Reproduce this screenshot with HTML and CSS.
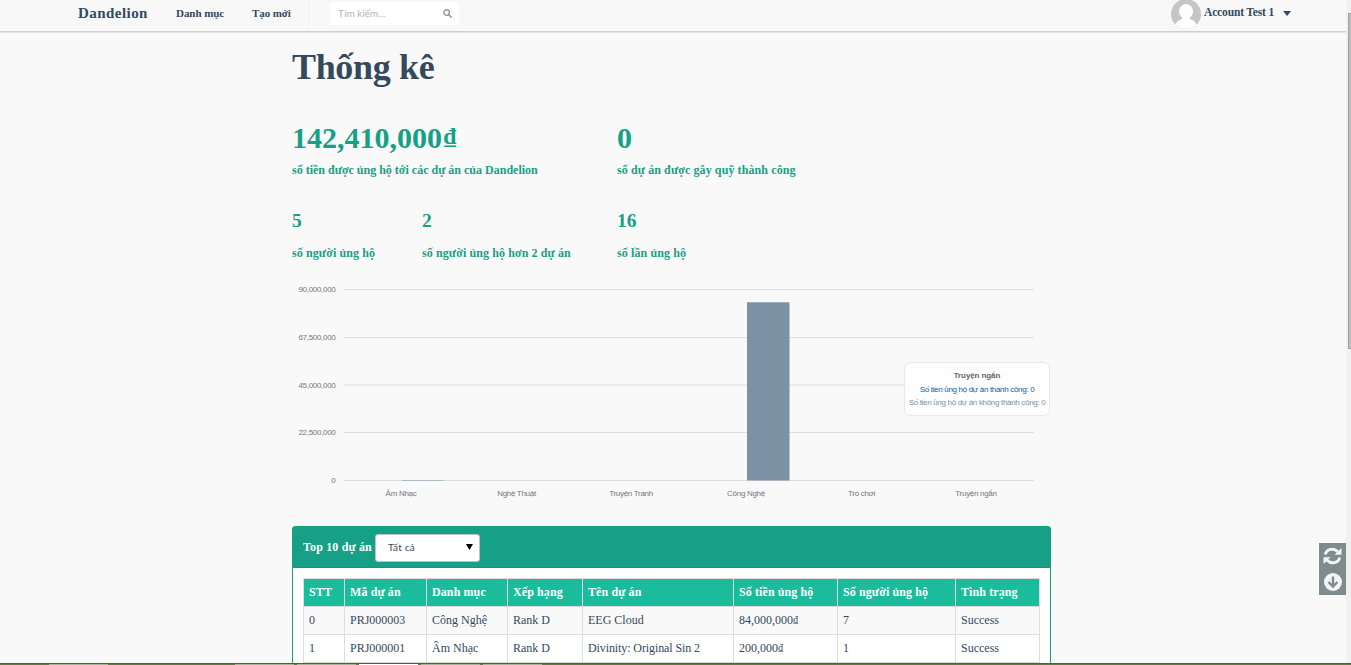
FILE: index.html
```html
<!DOCTYPE html>
<html lang="vi">
<head>
<meta charset="utf-8">
<title>Dandelion - Thống kê</title>
<link rel="stylesheet" href="styles.css">
</head>
<body>
<header class="topbar">
  <a class="brand">Dandelion</a>
  <a class="nav-a">Danh mục</a>
  <a class="nav-b">Tạo mới</a>
  <span class="divider"></span>
  <div class="search"><span class="hint">Tìm kiếm...</span>
    <svg width="9" height="9" viewBox="0 0 9 9"><circle cx="3.6" cy="3.6" r="2.8" fill="none" stroke="#8d99a5" stroke-width="1.4"/><path d="M5.7 5.7L8.2 8.2" stroke="#8d99a5" stroke-width="1.6" stroke-linecap="round"/></svg>
  </div>
  <div class="account">
    <svg class="avatar" width="30" height="30" viewBox="0 0 30 30"><defs><clipPath id="disc"><circle cx="15" cy="15" r="15"/></clipPath></defs><g clip-path="url(#disc)"><rect width="30" height="30" fill="#c5c5c5"/><ellipse cx="15" cy="12.500" rx="7" ry="7.500" fill="#fdfdfd"/><path d="M11 17H19V20C23 21 26 24 27 30H3C4 24 7 21 11 20Z" fill="#fdfdfd"/></g></svg>
    <span class="account-name">Account Test 1</span><span class="caret"></span>
  </div>
</header>
<main class="content">
  <h1>Thống kê</h1>
  <section class="stats large">
    <div><strong>142,410,000<span class="dong">₫</span></strong><p>số tiền được ủng hộ tới các dự án của Dandelion</p></div>
    <div><strong>0</strong><p class="wide">số dự án được gây quỹ thành công</p></div>
  </section>
  <section class="stats small">
    <div><strong>5</strong><p class="wide">số người ủng hộ</p></div>
    <div><strong>2</strong><p class="wide">số người ủng hộ hơn 2 dự án</p></div>
    <div><strong>16</strong><p class="wide">số lần ủng hộ</p></div>
  </section>
  <section class="chart">
    <svg width="759" height="226" viewBox="292 280 759 226">
      <g class="grid"><path d="M344 289.5H1034M344 337.5H1034M344 432.5H1034M344 480.5H1034"/><path class="soft" d="M344 385H1034"/></g>
      <rect x="402" y="480" width="42" height="1" fill="#a9bcc8"/>
      <rect x="747" y="302.3" width="42.5" height="178.2" fill="#7a92a3"/>
      <g class="axis" text-anchor="end"><text x="335.5" y="292">90,000,000</text><text x="335.5" y="340">67,500,000</text><text x="335.5" y="388">45,000,000</text><text x="335.5" y="435">22,500,000</text><text x="335.5" y="483">0</text></g>
      <g class="axis" text-anchor="middle"><text x="401" y="495.5">Âm Nhạc</text><text x="516.5" y="495.5">Nghệ Thuật</text><text x="631" y="495.5">Truyện Tranh</text><text x="746" y="495.5">Công Nghệ</text><text x="861.5" y="495.5">Trò chơi</text><text x="976" y="495.5">Truyện ngắn</text></g>
    </svg>
    <div class="tooltip"><b>Truyện ngắn</b><span class="ok">Số tiền ủng hộ dự án thành công: 0</span><span class="fail">Số tiền ủng hộ dự án không thành công: 0</span></div>
  </section>
  <section class="panel">
    <div class="panel-head"><b>Top 10 dự án</b><div class="select"><span>Tất cả</span><i></i></div></div>
    <div class="panel-body">
      <table>
        <colgroup><col class="c1"><col class="c2"><col class="c3"><col class="c4"><col class="c5"><col class="c6"><col class="c7"><col class="c8"></colgroup>
        <tr><th>STT</th><th>Mã dự án</th><th>Danh mục</th><th>Xếp hạng</th><th>Tên dự án</th><th>Số tiền ủng hộ</th><th>Số người ủng hộ</th><th>Tình trạng</th></tr>
        <tr class="odd"><td>0</td><td>PRJ000003</td><td>Công Nghệ</td><td>Rank D</td><td>EEG Cloud</td><td>84,000,000<span class="dong">₫</span></td><td>7</td><td>Success</td></tr>
        <tr><td>1</td><td>PRJ000001</td><td>Âm Nhạc</td><td>Rank D</td><td class="title">Divinity: Original Sin 2</td><td>200,000<span class="dong">₫</span></td><td>1</td><td>Success</td></tr>
      </table>
    </div>
  </section>
</main>
<div class="scrollbar"><span></span></div>
<div class="tools">
  <svg width="19" height="18" viewBox="0 0 19 18"><g fill="none" stroke="#f3f5f5" stroke-width="3"><path d="M2.3 7.5C3.6 1.8 11 0.5 14.8 4.8"/><path d="M16.7 10.5C15.4 16.2 8 17.500 4.200 13.200"/></g><path d="M18.500 1V7.800H11.500ZM.5 17V10.200H7.500Z" fill="#f3f5f5"/></svg>
  <svg width="18" height="18" viewBox="0 0 18 18"><circle cx="9" cy="9" r="9" fill="#f3f5f5"/><path d="M9 3.500V13M4.500 9L9 13.500L13.500 9" fill="none" stroke="#7f8c8d" stroke-width="2.400"/></svg>
</div>
<footer class="taskbar"><i class="t1"></i><i class="t2"></i><i class="t3"></i><i class="t4 active"></i><i class="t5"></i><i class="t6"></i></footer>
</body>
</html>
```
FILE: styles.css
```css
* { box-sizing: border-box; }
body { margin: 0; width: 1351px; height: 665px; overflow: hidden; position: relative; background: #f9f9f9; color: #34495e; font: 12px/17px "Liberation Serif", serif; }
.topbar { display: flex; width: 1346px; height: 32px; padding-left: 78px; background: #f8f8f8; border-bottom: 1px solid #cfcfcf; box-shadow: 0 1px 1px #e6e6e6; font-weight: bold; line-height: 26px; white-space: nowrap; }
.brand { width: 98px; font-size: 15px; letter-spacing: .45px; }
.nav-a { width: 76px; font-size: 11px; letter-spacing: -.05px; }
.nav-b { width: 57px; font-size: 11px; letter-spacing: -.1px; }
.divider { width: 2px; height: 29px; background: linear-gradient(90deg, #f0f0f0 50%, #fff 50%); }
.search { display: flex; align-items: center; justify-content: space-between; width: 129px; height: 23px; margin: 2px 0 0 19px; padding: 0 7px 0 8px; background: #fff; border-radius: 2px; color: #aeb6bf; font: 10px Lato, sans-serif; }
.hint { margin-top: -1px; }
.account { display: flex; margin-left: 712px; }
.avatar { margin-top: -1px; }
.account-name { margin: -1px 0 0 3px; font-size: 11.500px; letter-spacing: -.15px; }
.caret { width: 8px; height: 5px; margin: 11px 0 0 9px; background: #34495e; clip-path: polygon(0 0, 100% 0, 50% 100%); }
.content { width: 759px; margin-left: 292px; }
h1 { margin: 13px 0 0; font-size: 36px; line-height: 44px; letter-spacing: -.35px; }
.stats { display: grid; color: #16a085; font-weight: bold; white-space: nowrap; }
.stats p { margin: 0; }
.stats .wide { letter-spacing: .1px; }
.large { grid-template-columns: 325px 1fr; margin-top: 32px; }
.large strong { display: block; font-size: 30px; line-height: 34px; height: 34px; }
.large .dong { margin-left: 2px; font-size: 24px; line-height: 1; vertical-align: 4px; }
.large p { margin-top: 7px; }
.small { grid-template-columns: 130px 195px 1fr; margin-top: 31px; }
.small strong { display: block; font-size: 19.500px; line-height: 22px; }
.small p { margin-top: 13px; }
.chart { position: relative; height: 226px; margin-top: 18px; }
.chart svg { display: block; }
.grid { fill: none; stroke: #dfdfdf; }
.grid .soft { stroke: #ebebeb; stroke-width: 2; }
.axis { fill: #777; font: 8px "Liberation Sans", sans-serif; letter-spacing: -.3px; }
.tooltip { position: absolute; left: 612px; top: 82px; width: 146px; height: 54px; padding-top: 6px; display: flex; flex-direction: column; align-items: center; border: 1px solid #e8e8e8; border-radius: 6px; background: rgba(255,255,255,.85); color: #666; font: 8px/13px "Liberation Sans", sans-serif; letter-spacing: -.32px; white-space: nowrap; }
.tooltip b { line-height: 13px; margin-bottom: 1px; letter-spacing: -.1px; }
.ok { color: #0b62a4; }
.fail { color: #7a92a3; }
.panel { height: 160px; margin-top: 20px; background: #fff; border: 1px solid #16a085; border-radius: 3px 3px 0 0; }
.panel-head { display: flex; align-items: center; height: 41px; padding-left: 10px; background: #16a085; border-bottom: 1px solid #337ab7; color: #fff; }
.panel-head b { letter-spacing: .15px; }
.select { display: flex; align-items: center; justify-content: space-between; width: 105px; height: 28px; margin: 1px 0 0 3px; padding: 0 6px 0 12px; background: #fff; border: 1px solid #bdc3c7; border-radius: 3px; color: #34495e; font: 10px Lato, sans-serif; letter-spacing: .2px; }
.select span { margin-top: -2px; }
.select i { width: 7px; height: 6px; margin-top: -1px; background: #000; clip-path: polygon(0 0, 100% 0, 50% 100%); }
.panel-body { padding: 10px; }
table { width: 737px; table-layout: fixed; border-collapse: collapse; white-space: nowrap; }
.c1 { width: 41px; } .c2 { width: 82px; } .c3 { width: 81px; } .c4 { width: 75px; }
.c5 { width: 151px; } .c6 { width: 104px; } .c7 { width: 118px; } .c8 { width: 84px; }
tr { height: 28px; }
th, td { padding: 0 5px 1px; border: 1px solid #ddd; text-align: left; }
th { background: #1abc9c; color: #fff; letter-spacing: .1px; }
td .dong { font-size: 10px; line-height: 1; vertical-align: 1px; }
.title { letter-spacing: -.1px; }
.odd { background: #f9f9f9; }
.scrollbar { position: absolute; right: 0; top: 0; width: 5px; height: 663px; background: #f1f1f1; }
.scrollbar span { display: block; height: 336px; margin: 13px 0 0 2px; background: #bcbcbc; border: solid #a0a0a0; border-width: 1px 0 1px 1px; }
.tools { position: absolute; left: 1319px; top: 543px; width: 27px; height: 52px; padding: 4px 0; display: flex; flex-direction: column; align-items: center; justify-content: space-between; background: #7f8c8d; }
.taskbar { position: absolute; left: 0; top: 663px; width: 1351px; height: 2px; display: flex; background: #5d7b42; border-top: 1px solid #49642f; }
.taskbar i { width: 59px; height: 1px; background: #a6b592; }
.t1 { margin-left: 49px; } .t2 { margin-left: 127px; }
.t3, .t4, .t5, .t6 { margin-left: 3px; }
.taskbar .active { background: #fff; }
```
